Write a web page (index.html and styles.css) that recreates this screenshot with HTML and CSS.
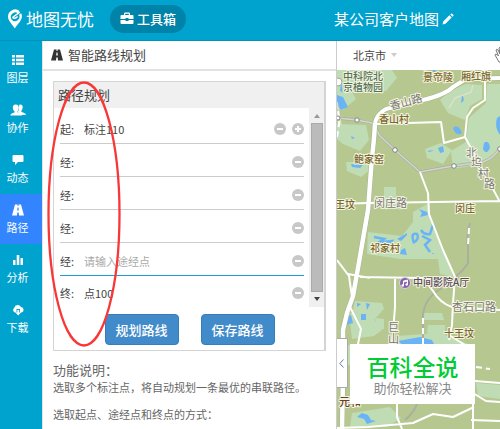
FILE: index.html
```html
<!DOCTYPE html>
<html lang="zh-CN">
<head>
<meta charset="utf-8">
<title>地图无忧</title>
<link rel="stylesheet" href="styles.css">
</head>
<body>
<header class="topbar">
  <a class="brand" href="#">
    <svg width="16" height="20" viewBox="0 0 16 20"><path fill="#fff" d="M12.6 1.9A7.2 7.2 0 0 0 1 7.6C1 11.6 4.8 15.200 7.800 19.500C10.700 15.200 14.700 11.700 14.900 7.600C15 6.300 14.700 5.200 14.100 4.200L12 5.700A4.400 4.400 0 1 1 10.800 4.300Z"/><path d="M5.500 8.500L12.800 3.200M5.400 8.500Q8 10.400 10.600 7.600" fill="none" stroke="#fff" stroke-width="1.500"/></svg>
    <span>地图无忧</span>
  </a>
  <button class="toolbox" type="button">
    <svg width="14" height="13" viewBox="0 0 14 13"><path fill="#fff" fill-rule="evenodd" d="M4 3V1.500Q4 .5 5 .5H9Q10 .5 10 1.500V3H12.500Q13.500 3 13.500 4V7H8.500V6H5.500V7H.5V4Q.5 3 1.500 3ZM5.200 3H8.800V1.800H5.200ZM.5 8H5.500V9H8.500V8H13.500V11Q13.500 12 12.500 12H1.500Q.5 12 .5 11Z"/></svg>
    <span>工具箱</span>
  </button>
  <h1 class="project">某公司客户地图
    <svg width="12" height="12" viewBox="0 0 12 12"><path fill="#fff" d="M.5 11.500L1.200 8.500L7.400 2.300L9.700 4.600L3.500 10.800ZM8.200 1.500L9 .7Q9.600.2 10.200.7L11.300 1.800Q11.800 2.400 11.300 3L10.500 3.800Z"/></svg>
  </h1>
</header>
<div class="workspace">
  <nav class="sidebar">
    <a href="#"><svg width="12" height="12" viewBox="0 0 12 12"><path fill="#fff" d="M0 1H3V3.500H0ZM4 1H12V3.500H4ZM0 4.700H3V7.200H0ZM4 4.700H12V7.200H4ZM0 8.400H3V11H0ZM4 8.400H12V11H4Z"/></svg>图层</a>
    <a href="#"><svg class="wide" width="16" height="12" viewBox="0 0 16 12"><path fill="#fff" d="M9.500.5Q12.800 0 12.700 3.200Q12.600 5.600 11.400 6.800V8Q15.500 9 16 11H11L7.500 8Q9.500 6 8.800 3Z"/><path fill="#fff" d="M5.500.6Q8.800.4 8.700 3.700Q8.600 6 7.500 7.200V8.400Q11.700 9.300 12 11.500H.3Q.6 9.300 4.500 8.400V7.200Q2.700 5.800 2.800 3.500Q2.700 1 5.500.6Z"/></svg>协作</a>
    <a href="#"><svg width="12" height="12" viewBox="0 0 12 12"><path fill="#fff" d="M1.500 1H10.500Q11.500 1 11.500 2V7Q11.500 8 10.500 8H6L3 11V8H1.500Q.5 8 .5 7V2Q.5 1 1.500 1Z"/></svg>动态</a>
    <a href="#" class="active"><svg width="12" height="12" viewBox="0 0 12 12"><path fill="#fff" fill-rule="evenodd" d="M3 .5H5.500V2H6.500V.5H9L12 11.500H7L6.700 8.500H5.300L5 11.500H0ZM5.500 3.500L5.200 6.500H6.800L6.500 3.500Z"/></svg>路径</a>
    <a href="#"><svg width="12" height="12" viewBox="0 0 12 12"><path fill="#fff" d="M1 6H3.500V11H1ZM4.700 1H7.300V11H4.700ZM8.500 4H11V11H8.500Z"/></svg>分析</a>
    <a href="#"><svg width="12" height="12" viewBox="0 0 12 12"><path fill="#fff" d="M3 8.500A2.700 2.700 0 0 1 2.300 3.700A3.600 3.600 0 0 1 9 3A2.800 2.800 0 0 1 9.500 8.500H8V5H4.500V8.500ZM5.300 6H7.200V8.500H9L6.200 11.500L3.500 8.500H5.300Z"/></svg>下载</a>
  </nav>
  <section class="panel">
    <h2 class="panel-title">
      <svg width="12" height="12" viewBox="0 0 12 12"><path fill="#333" fill-rule="evenodd" d="M3 .5H5.500V2H6.500V.5H9L12 11.500H7L6.700 8.500H5.300L5 11.500H0ZM5.500 3.500L5.200 6.500H6.800L6.500 3.500Z"/></svg>
      智能路线规划
    </h2>
    <form class="card">
      <h3>路径规划</h3>
      <div class="stops">
        <div class="rows">
          <div class="row first"><label for="s1">起:</label><input id="s1" value="标注110"><button type="button" class="round" aria-label="删除"></button><button type="button" class="round plus" aria-label="添加"></button></div>
          <div class="row"><label for="s2">经:</label><input id="s2"><button type="button" class="round" aria-label="删除"></button></div>
          <div class="row"><label for="s3">经:</label><input id="s3"><button type="button" class="round" aria-label="删除"></button></div>
          <div class="row"><label for="s4">经:</label><input id="s4"><button type="button" class="round" aria-label="删除"></button></div>
          <div class="row current"><label for="s5">经:</label><input id="s5" placeholder="请输入途经点"><button type="button" class="round" aria-label="删除"></button></div>
          <div class="row last"><label for="s6">终:</label><input id="s6" value="点100"><button type="button" class="round" aria-label="删除"></button></div>
        </div>
        <div class="scroll"><i class="up"></i><i class="thumb"></i><i class="down"></i></div>
      </div>
      <div class="actions"><button type="button">规划路线</button><button type="button">保存路线</button></div>
      <svg class="mark" width="76" height="268" viewBox="0 0 76 268"><ellipse cx="38" cy="134" rx="35.500" ry="131.500" fill="none" stroke="#f83838" stroke-width="2.300"/></svg>
    </form>
    <div class="help">
      <h3>功能说明：</h3>
      <p>选取多个标注点，将自动规划一条最优的串联路径。</p>
      <p>选取起点、途经点和终点的方式：</p>
    </div>
  </section>
  <main class="map">
    <div class="map-bar">
      <select aria-label="城市"><option>北京市</option></select><i class="caret"></i>
      <button type="button" class="hand" aria-label="拖动"><svg width="16" height="18" viewBox="0 0 16 18"><path d="M5 16L1 9Q1 7.500 3 8.500L4.500 10L2 4Q2.500 2.500 4 4L6 8L5 2Q6 .5 7 2L9 8L10 2Q11 1 12 3V13L10 17Z" fill="#fff" stroke="#777"/></svg></button>
    </div>
    <div class="canvas">
      <svg class="tiles" viewBox="337 70 163 359" preserveAspectRatio="xMinYMin slice">
        <rect x="337" y="70" width="800" height="800" fill="#b6c890"/>
        <g fill="#bfdcb5">
          <path d="M337 70H392L397 78L386 91L352 92L356 99L343 110L337 109Z"/>
          <path d="M440 100L450 91L466 84L482 85V99L470 106L465 120L448 113Z"/>
          <path d="M487 84H500V150L480 164L453 169L451 151L466 142L469 118L486 103Z"/>
          <path d="M337 124L366 125L369 140L360 151L343 144L337 139Z"/>
          <path d="M346 162H371L370 170L361 177L347 171Z"/>
          <path d="M425 149L441 143L452 150L443 164L427 158Z"/>
          <path d="M384 187H396V198L406 204L400 210L384 202Z"/>
          <path d="M368 232L402 236L413 222V212L427 204L435 232L447 259L453 277L440 274L438 259L400 259L367 254Z"/>
          <path d="M355 301L382 303L384 309L374 320H351Z"/>
          <path d="M349 313H369L382 330L374 336L352 339Z"/>
          <path d="M375 318L384 319L384 329H377Z"/>
          <path d="M424 313H442L444 320H424Z"/>
          <path d="M397 336L440 333L468 344V360H398Z"/>
          <path d="M428 325H445V340L426 342Z"/>
          <path d="M337 345H350V365H337ZM352 413L390 407L401 418L387 427H350Z"/>
          <path d="M476 383L500 385V399L478 396Z"/>
        </g>
        <g fill="#6ab4f6">
          <path d="M341 82L343 93L340 91ZM337 95L343 97L348 107L341 110L337 105Z"/>
          <path d="M462 95Q466 100 461 103ZM497 118L500 116V135Q494 127 497 118ZM453 128Q458 123 462 133Q456 137 453 128ZM484 143Q489 139 490 148Q486 156 483 149Z"/>
          <path d="M351 164L363 165L360 168L352 167ZM438 148L443 146L444 152L440 153ZM351 136L355 138L352 139ZM427 151L434 150L430 152Z"/>
          <path d="M419 209L427 212L428 215L420 217L422 213ZM401 250L405 248L407 255L400 254ZM397 239L407 233L407 235L401 241ZM432 253L435 254H432Z"/>
          <path d="M343 319L351 315L353 323L346 325ZM357 303L361 304L357 307ZM366 303L370 304L367 310ZM361 314L366 314V320H361Z"/>
          <path d="M398 341L420 337L432 340L435 346H404ZM357 417L362 413L368 415L371 420L376 421L367 424L364 419Z"/>
        </g>
        <g fill="none" stroke="#6ab4f6" stroke-width="2.500"><path d="M374 237L384 239L378 243L388 247L392 241L382 242M414 243Q410 232 417 234Q420 239 413 243M421 230Q424 235 430 234L433 225M422 236L430 240L425 245L430 252M434 70V73"/></g>
        <g fill="none" stroke="#aab09f" stroke-linejoin="round">
          <path d="M337 118L357 120L372 123L380 136L395 150L420 172L453 166L483 162Q494 158 500 148" stroke-width="2.800"/>
          <path d="M470 223Q466 235 468 248V263Q464 270 455 277M442 288Q424 298 423 316V344M417 404Q412 415 405 420" stroke-width="2"/>
          <path d="M423 70L438 75L453 74M473 85L471 92L455 98L449 108M337 102L341 125" stroke="#d9e0cd" stroke-width="1.500"/>
        </g>
        <path d="M337 118L357 120L372 123L380 136L395 150L420 172L453 166L483 162Q494 158 500 148" fill="none" stroke="#d3d6cf" stroke-width="1.500"/>
        <g fill="none" stroke="#a5b18d" stroke-width="4.500" stroke-linejoin="round">
          <path d="M375 123Q374 142 372 157L368 210L358 268L353 296L347 313L343 330V377L342 432" stroke-width="5.500"/>
          <path d="M375 123Q377 114 386 109L423 100Q445 95 453 87L466 79L500 78" stroke-width="5"/>
        </g>
        <g fill="none" stroke="#fff" stroke-width="2" stroke-linejoin="round">
          <path d="M375 123Q374 142 372 157L368 210L358 268L353 296L347 313L343 330V377L342 432" stroke-width="4.500"/>
          <path d="M375 123Q377 114 386 109L423 100Q445 95 453 87L466 79L500 78" stroke-width="4"/>
          <path d="M485 80V100L473 108L467 117L465 137L500 202M465 137L444 143L441 122L375 124M337 204L368 203L500 201"/>
          <path d="M420 172L428 193L429 214L443 250L455 277L453 303L452 325L449 340M449 335L473 350V393L486 401L500 402M473 393V429"/>
          <path d="M360 277L423 278L433 291Q440 303 452 307L500 310M395 279V307L392 344M337 260L349 276L352 297M348 274L370 278M471 420L500 421"/>
          <path d="M337 428L368 427L413 423L433 414L453 417L474 407M397 404V417L402 429M350 307L361 329L358 344M475 381L500 383M484 70L484 78"/>
          <path d="M337 137L339 124L338 110M469 228L468 246M476 367L490 369M423 318V344" stroke-dasharray="6 4"/>
        </g>
        <g fill="#fff" stroke="#7d8485"><circle cx="338" cy="118" r="2"/><circle cx="357" cy="120" r="2.200"/><circle cx="395" cy="150" r="2.300"/><circle cx="454" cy="166" r="2.300"/><circle cx="500" cy="149" r="2.300"/></g>
        <circle cx="405" cy="283" r="5.500" fill="#8563a6" stroke="#ddd0ea"/><path d="M403.500 285.500V281L407.500 280V284.500M403.500 282L407.500 281" fill="none" stroke="#fff"/><circle cx="402.700" cy="285.500" r="1.200" fill="#fff"/><circle cx="406.700" cy="284.500" r="1.200" fill="#fff"/>
        <circle cx="338" cy="82" r="4" fill="#fff" stroke="#9da58f"/>
        <g class="labels">
          <g class="green"><text x="343" y="80">中科院北</text><text x="343" y="91">京植物园</text></g>
          <text x="423" y="81">景帝陵</text><text x="461" y="80">厢红旗</text>
          <text x="379" y="123">香山村</text><text x="354" y="163">鲍家窑</text>
          <text x="335" y="208">王坟</text><text x="455" y="212">闵庄</text><text x="370" y="252">祁家村</text>
          <text x="444" y="337">十王坟</text><text x="339" y="406" class="brown">元和</text>
          <g class="road"><text x="391" y="110" transform="rotate(-15 391 110)">香山路</text><text x="374" y="207">闵庄路</text><text x="466" y="157">北</text><text x="471" y="167">坞</text><text x="478" y="178">村</text><text x="484" y="188">路</text><text x="452" y="311">杏石口路</text><text x="388" y="331">巨</text><text x="388" y="343">山</text></g>
          <text x="413" y="286" class="place">中间影院A厅</text>
        </g>
      </svg>
      <button type="button" class="collapse" aria-label="收起"><svg width="5" height="9" viewBox="0 0 5 9"><path d="M4.500.5L.8 4.500L4.500 8.500" fill="none" stroke="#6879a8"/></svg></button>
      <div class="badge"><strong>百科全说</strong><span>助你轻松解决</span></div>
    </div>
  </main>
</div>
</body>
</html>
```
FILE: styles.css
```css
* { box-sizing: border-box; }
body {
  margin: 0;
  height: 100vh;
  display: flex;
  flex-direction: column;
  overflow: hidden;
  font: 11px/16px "Noto Sans CJK SC", sans-serif;
  color: #444;
  background: #fff;
}
h1, h2, h3, p { margin: 0; font-weight: 400; }
button, input, select { font: inherit; color: inherit; border: 0; padding: 0; margin: 0; background: none; }
a { color: #fff; text-decoration: none; }
svg { flex: none; }

.topbar {
  flex: none;
  height: 41px;
  display: flex;
  align-items: center;
  padding: 0 46px 3px 7px;
  background: #00a2ce;
  border-bottom: 1px solid #0092ba;
  color: #fff;
}
.brand { display: flex; align-items: center; gap: 3px; font-size: 17px; font-weight: 400; }
.toolbox {
  display: flex;
  align-items: center;
  justify-content: center;
  gap: 3px;
  height: 28px;
  margin-left: 16px;
  padding: 0 10px;
  border-radius: 14px;
  background: #0083a8;
  color: #fff;
  font-size: 13px;
  font-weight: 500;
}
.project { margin-left: auto; display: flex; align-items: center; gap: 3px; font-size: 15px; }

.workspace { flex: 1; min-height: 0; display: flex; }
.sidebar { flex: none; width: 42px; padding-top: 3px; background: #00a2ce; }
.sidebar a {
  height: 50px;
  display: flex;
  flex-direction: column;
  align-items: center;
  justify-content: center;
  gap: 4px;
  padding-right: 7px;
  font-size: 11px;
  line-height: 14px;
}
.sidebar .active { background: #3385ff; }

.panel { flex: none; width: 295px; border-left: 1px solid #e4e4e4; border-right: 1px solid #ccc; }
.panel-title {
  height: 30px;
  display: flex;
  align-items: center;
  gap: 5px;
  padding-left: 8px;
  padding-bottom: 1px;
  border-bottom: 2px solid #e2e2e2;
  font-size: 13px;
}
.card { position: relative; margin: 10px 10px 0; border: 1px solid #d4d4d4; border-right-width: 2px; }
.card h3 { height: 26px; padding: 1px 4px; font-size: 13px; line-height: 24px; background: #f0f0f0; }
.stops { display: flex; }
.rows { flex: 1; min-width: 0; padding: 0 5px 0 6px; }
.row { height: 33px; display: flex; align-items: center; gap: 6px; padding-top: 4px; border-bottom: 1px solid #ccc; }
.row.first { height: 36px; padding-top: 6px; }
.row label { width: 18px; font-size: 11px; }
.row input { flex: 1; min-width: 0; height: 18px; font-size: 11px; outline: 0; }
.row input::placeholder { color: #aaa; opacity: 1; }
.row.current { border-bottom-color: #1e9bd0; }
.row.last { border: 0; height: 31px; padding-top: 2px; }
.round { flex: none; width: 12px; height: 12px; border-radius: 50%; background: linear-gradient(#fff, #fff) center / 6px 2px no-repeat #c8c8c8; }
.round.plus { background: linear-gradient(#fff, #fff) center / 6px 2px no-repeat, linear-gradient(#fff, #fff) center / 2px 6px no-repeat #c8c8c8; }
.scroll { flex: none; width: 15px; display: flex; flex-direction: column; align-items: center; gap: 5px; padding: 6px 0; background: #f0f0f0; }
.scroll i { border: 3px solid transparent; }
.scroll .up { border-top: 0; border-bottom: 4px solid #999; }
.scroll .thumb { flex: 1; width: 12px; border: 1px solid #aaa; background: #bbb; }
.scroll .down { border-bottom: 0; border-top: 4px solid #444; }
.actions { display: flex; justify-content: center; gap: 22px; padding: 7px 0 5px 1px; }
.actions button {
  width: 74px;
  height: 31px;
  border: 1px solid #357ebd;
  border-radius: 4px;
  background: #428bca;
  color: #fff;
  font-size: 13px;
  font-weight: 500;
}
.mark { position: absolute; left: -8px; top: -2px; pointer-events: none; }
.help { padding: 10px; white-space: nowrap; color: #666; }
.help h3 { font-size: 13px; line-height: 18px; }
.help p { margin-bottom: 11px; }

.map { flex: 1; min-width: 0; display: flex; flex-direction: column; }
.map-bar { flex: none; height: 29px; display: flex; align-items: center; gap: 5px; padding: 0 0 1px 16px; overflow: hidden; }
.map-bar select { appearance: none; }
.caret { border: 3px solid transparent; border-top: 4px solid #ccc; border-bottom: 0; }
.hand { margin-left: auto; margin-right: -10px; height: 18px; }
.canvas { position: relative; flex: 1; min-height: 0; overflow: hidden; }
.tiles { display: block; width: 100%; height: 100%; }
.labels { font-size: 10px; font-weight: 500; fill: #79662c; stroke: #f4f4df; stroke-width: 2px; stroke-linejoin: round; paint-order: stroke; }
.labels .green { fill: #527158; }
.labels .road { font-size: 11px; font-weight: 400; fill: #777; }
.labels .brown { fill: #6b4029; font-size: 11px; }
.labels .place { fill: #57495f; }
.collapse {
  position: absolute;
  left: -1px;
  top: 268px;
  width: 12px;
  height: 50px;
  display: flex;
  align-items: center;
  justify-content: center;
  background: #fff;
  border: 1px solid #aaa;
  border-left: 0;
}
.badge {
  position: absolute;
  left: 13px;
  top: 274px;
  width: 125px;
  height: 60px;
  display: flex;
  flex-direction: column;
  align-items: center;
  justify-content: center;
  padding-top: 2px;
  background: #fff;
}
.badge strong { color: #0c3; font-size: 23px; line-height: 26px; font-weight: 500; }
.badge span { color: #888; font-size: 13px; line-height: 18px; }
```
